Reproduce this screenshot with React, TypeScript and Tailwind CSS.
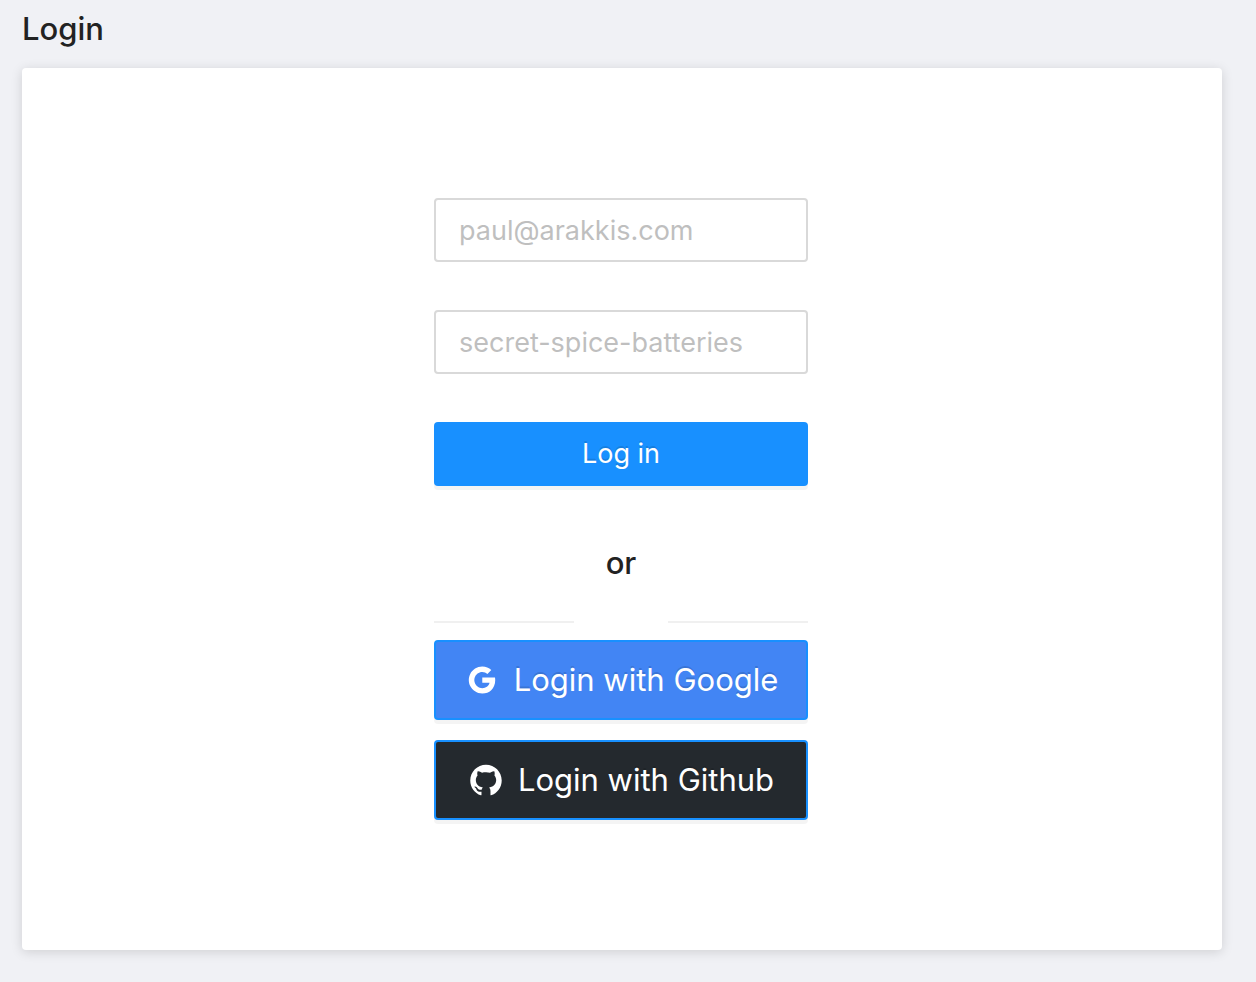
import type { ComponentType, ReactNode } from "react";
import { AiFillGithub, AiOutlineGoogle } from "react-icons/ai";

type FieldProps = {
  label: string;
  type: string;
  placeholder: string;
};

function Field({ label, type, placeholder }: FieldProps) {
  return (
    <input
      aria-label={label}
      type={type}
      placeholder={placeholder}
      className="block h-16 w-full rounded-sm border-2 border-[#d9d9d9] bg-white px-[23px] text-[27px] text-[#222] placeholder:text-[#bfbfbf]"
    />
  );
}

type SocialButtonProps = {
  icon: ComponentType<{ className?: string }>;
  color: string;
  children: ReactNode;
};

function SocialButton({ icon: Icon, color, children }: SocialButtonProps) {
  return (
    <button
      type="button"
      className={`flex h-20 w-full items-center justify-center gap-3.5 rounded-sm border-2 border-[#1890ff] text-[31px] whitespace-nowrap text-white shadow-[0_4px_0_rgba(0,0,0,0.045)] text-shadow-[0_-2px_0_rgba(0,0,0,0.12)] ${color}`}
    >
      <Icon className="size-9 shrink-0" />
      {children}
    </button>
  );
}

export default function App() {
  return (
    <div className="min-h-screen bg-[#f0f1f5] pr-[34px] pb-8 pl-[22px] font-['Inter',sans-serif] text-[#222]">
      <h1 className="flex h-[68px] items-start pt-[9px] text-[31px] leading-10 font-medium">
        Login
      </h1>
      <main className="rounded-sm bg-white pt-[130px] pr-[26px] pb-[130px] pl-6 shadow-[0_2px_12px_rgba(0,0,0,0.14)]">
        <div className="mx-auto w-full max-w-[374px]">
          <form className="flex flex-col gap-12">
            <Field label="Email" type="email" placeholder="paul@arakkis.com" />
            <Field label="Password" type="password" placeholder="secret-spice-batteries" />
            <button
              type="submit"
              className="h-16 w-full rounded-sm bg-[#1890ff] text-[27px] text-white shadow-[0_4px_0_rgba(0,0,0,0.045)] text-shadow-[0_-2px_0_rgba(0,0,0,0.12)]"
            >
              Log in
            </button>
          </form>
          <div className="mt-12 mb-[17px] flex h-[89px] items-end">
            <div className="h-0.5 flex-1 bg-[#f0f0f0]" />
            <span className="w-[94px] self-start text-center text-[31px] leading-[58px] font-medium">
              or
            </span>
            <div className="h-0.5 flex-1 bg-[#f0f0f0]" />
          </div>
          <div className="flex flex-col gap-5">
            <SocialButton icon={AiOutlineGoogle} color="bg-[#4285f4]">
              Login with Google
            </SocialButton>
            <SocialButton icon={AiFillGithub} color="bg-[#24292e]">
              Login with Github
            </SocialButton>
          </div>
        </div>
      </main>
    </div>
  );
}
